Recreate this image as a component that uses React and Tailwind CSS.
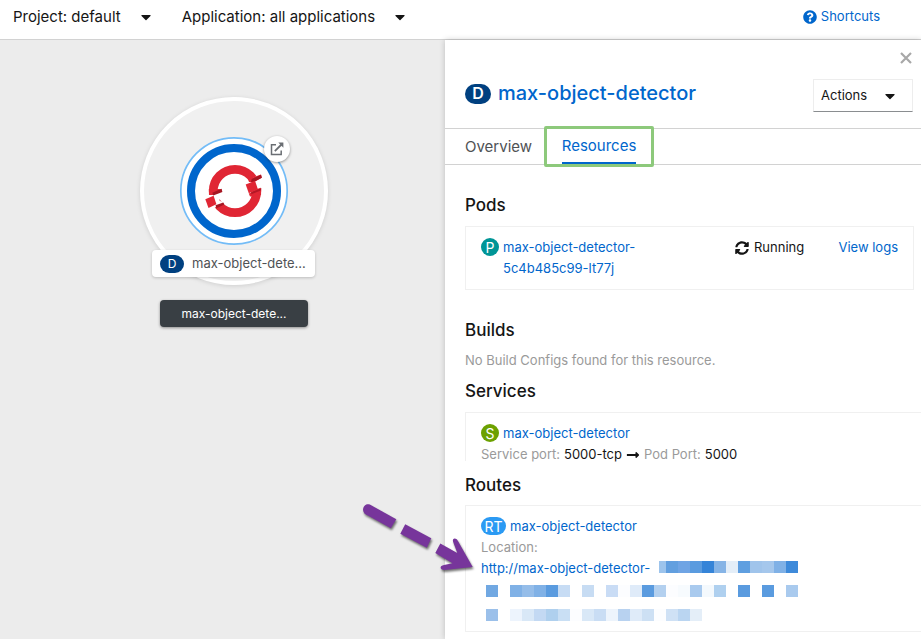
import {
  FaCaretDown,
  FaLongArrowAltRight,
  FaQuestionCircle,
} from 'react-icons/fa';

const routeHostCells = [
  'w-[7px] bg-[#9dc4ec]',
  'w-3 bg-[#629fdf]',
  'w-3 bg-[#6fa4e4]',
  'w-3 bg-[#5a9bdf]',
  'w-3 bg-[#3584d8]',
  'w-3 bg-[#86b4e6]',
  'w-3 bg-[#e4eef8]',
  'w-3 bg-[#5f9fe0]',
  'w-3 bg-[#a0c4eb]',
  'w-3 bg-[#a5c7ec]',
  'w-3 bg-[#80b1e6]',
  'w-3 bg-[#3e8ada]',
];

const routeDomainCells = [
  'bg-[#71a8e2]', '', 'bg-[#80b1e6]', 'bg-[#95bde9]', 'bg-[#80b1e6]', 'bg-[#5a9bdf]',
  'bg-[#c7dcf4]', '', 'bg-[#c7dcf3]', '', 'bg-[#c9dcf5]', 'bg-[#fcfdff]', 'bg-[#dfebf9]',
  'bg-[#5a9bdf]', 'bg-[#b3d0ef]', 'bg-[#fcfdff]', 'bg-[#f7fbfe]', 'bg-[#a9caee]',
  'bg-[#f4f9fd]', 'bg-[#afd0ef]', '', 'bg-[#5a9bdf]', '', 'bg-[#5a9bdf]', '', 'bg-[#a9caee]',
];

const routeSuffixCells = [
  'bg-[#9bc0ea]', '', 'bg-[#edf4fd]', 'bg-[#d9e8f7]', 'bg-[#c3d9f3]', 'bg-[#afd0ee]',
  'bg-[#c9dff4]', 'bg-[#fcfdff]', 'bg-[#d9e8f7]', 'bg-[#c9ddf4]', 'bg-[#edf4fc]',
  'bg-[#b8d2f0]', 'bg-[#dfebf9]', 'bg-[#cde0f4]', 'bg-[#fcfdff]', 'bg-[#cfe1f5]',
  'bg-[#bad5f1]', 'bg-[#e4eef8]',
];

function MaskRow({ cells }) {
  return (
    <div className="flex h-3 pl-[5px]" aria-hidden="true">
      {cells.map((color, i) => (
        <span key={i} className={`w-3 ${color}`} />
      ))}
    </div>
  );
}

function SyncIcon() {
  return (
    <svg viewBox="0 0 512 512" className="size-[14px]" fill="currentColor" aria-hidden="true">
      <path d="M370.72 133.28C339.458 104.008 298.888 87.962 255.848 88c-77.458.068-144.328 53.178-162.791 126.85-1.344 5.363-6.122 9.15-11.651 9.15H24.103c-7.498 0-13.194-6.807-11.807-14.176C33.933 94.924 134.813 8 256 8c66.448 0 126.791 26.136 171.315 68.685L463.03 40.97C478.149 25.851 504 36.559 504 57.941V192c0 13.255-10.745 24-24 24H345.941c-21.382 0-32.09-25.851-16.971-40.971l41.75-41.749zM32 296h134.059c21.382 0 32.09 25.851 16.971 40.971l-41.75 41.75c31.262 29.273 71.835 45.319 114.876 45.28 77.418-.07 144.315-53.144 162.787-126.849 1.344-5.363 6.122-9.15 11.651-9.15h57.304c7.498 0 13.194 6.807 11.807 14.176C478.067 417.076 377.187 504 256 504c-66.448 0-126.791-26.136-171.315-68.685L48.97 471.03C33.851 486.149 8 475.441 8 454.059V320c0-13.255 10.745-24 24-24z" />
    </svg>
  );
}

function TopologyNode() {
  return (
    <div className="absolute top-[57px] left-[139px] w-[190px]">
      <svg viewBox="0 0 190 190" className="size-[190px] drop-shadow-[0_1px_2px_rgba(0,0,0,0.12)]" aria-hidden="true">
        <circle cx="95" cy="94" r="92" fill="#f0f0f0" stroke="#fff" strokeWidth="4" />
        <circle cx="95" cy="94" r="53.2" fill="#fff" stroke="#73bcf7" strokeWidth="1.7" />
        <circle cx="95" cy="94" r="43" fill="#fff" stroke="#0066cc" strokeWidth="8" />
        <circle cx="96" cy="94" r="21.7" fill="none" stroke="#e02634" strokeWidth="8.8" />
        <path d="M107 84.5 L112 82 L124 76 L124 90 L118 92 L109 96 L106 88Z" fill="#fff" />
        <path d="M68 95.5 L84 92 L86 98 L80 103 L84 106 L76 110.5 L68 112Z" fill="#fff" />
        <path d="M109 82.2 L122 77.4 L122.8 80.7 L114.3 85.3 L110 85Z" fill="#e02634" />
        <path d="M112.7 82 L122 77.7 L122.8 80.7 L114.5 85.2 L112 85Z" fill="#a61622" />
        <path d="M106.7 87.4 L116 83.7 L118.9 92.3 L109.8 96.3Z" fill="#e02634" />
        <path d="M109.8 96.5 L122.3 91.4 L122 98 L111 99.5Z" fill="#e02634" />
        <path d="M112 95.2 L122.3 91.2 L121.8 93.6 L112.4 97.2Z" fill="#b31725" />
        <path d="M69.8 92 L79 92 L83 92.2 L74 98 L70 98Z" fill="#e02634" />
        <path d="M73.3 95.8 L82.6 91.7 L83.4 94.9 L74.3 98.6Z" fill="#a61622" />
        <path d="M66.3 102.3 L74.6 98.8 L77.4 107.3 L69.5 111Z" fill="#e02634" />
        <path d="M76.5 108.3 L84.4 105.6 L85.4 107.6 L77.4 111.2Z" fill="#a61622" />
      </svg>
      <a
        href="#open-url"
        aria-label="Open URL"
        className="absolute top-[39px] left-[125px] flex size-[26px] items-center justify-center rounded-full bg-white text-[#6a6e73] shadow-[0_1px_3px_rgba(0,0,0,0.4)]"
      >
        <svg viewBox="0 0 14 14" className="size-[14px]" fill="none" stroke="currentColor" aria-hidden="true">
          <path d="M6 2.8H1.5V12.5H11.2V8.5" strokeWidth="1.5" />
          <path d="M4.8 9.2L11.5 2.5" strokeWidth="1.8" />
          <path d="M8.3 .6H13.4V5.7Z" fill="currentColor" stroke="none" />
        </svg>
      </a>
      <button
        type="button"
        className="absolute top-[153px] left-[13px] flex h-[27px] w-[163px] items-center gap-2 rounded-[4px] bg-white pl-2 text-[13px] whitespace-nowrap text-[#4f5255] shadow-[0_1px_3px_rgba(0,0,0,0.2)]"
      >
        <span className="flex h-[18px] w-6 items-center justify-center rounded-full bg-[#004080] text-[12px] text-white">D</span>
        max-object-dete...
      </button>
      <button
        type="button"
        className="absolute top-[203px] left-[21px] h-[27px] w-[148px] rounded-[4px] bg-[#393f44] text-[12px] whitespace-nowrap text-white shadow-[0_1px_3px_rgba(0,0,0,0.4)]"
      >
        max-object-dete...
      </button>
    </div>
  );
}

function PointerArrow() {
  return (
    <svg
      viewBox="0 0 120 80"
      className="pointer-events-none absolute top-[457px] left-[358px] h-20 w-[120px] drop-shadow-[1px_2px_1px_rgba(0,0,0,0.55)]"
      aria-hidden="true"
    >
      <g fill="#77359b">
        <path d="M11.8 7.5 L38.3 22.3 L32.8 31.2 L7.6 17.3 C2.4 13.8 5.8 5.3 11.8 7.5Z" />
        <path d="M47.2 27.2 L73.3 41.3 L68.8 50.7 L42.3 36.7Z" />
        <path d="M82.3 46.6 L99.3 56 L95 44.5 C94 40.8 98.3 40.5 99.8 43.7 L114.7 70 L86.6 73 C81.6 73.2 81.2 68.6 86 68 L94.5 66.3 L77.3 56Z" />
      </g>
    </svg>
  );
}

function ResourceBadge({ children, className }) {
  return (
    <span className={`mt-px flex h-[18px] shrink-0 items-center justify-center rounded-full text-[14px] text-white ${className}`}>
      {children}
    </span>
  );
}

function SectionTitle({ children, className = '' }) {
  return <h2 className={`text-[17px] leading-6 font-medium ${className}`}>{children}</h2>;
}

export default function App() {
  return (
    <div className="flex min-h-screen flex-col bg-[#ececec] font-['Inter','Liberation_Sans',sans-serif] text-[13px] leading-[21px] text-[#151515]">
      <header className="flex h-10 items-center border-b border-[#d2d2d2] bg-white pr-[41px] pb-[6px] pl-[13px] text-[15px]">
        <button type="button" className="flex items-center gap-5">
          Project: default
          <FaCaretDown className="h-4 w-[10px]" />
        </button>
        <button type="button" className="ml-[31px] flex items-center gap-5">
          Application: all applications
          <FaCaretDown className="h-4 w-[10px]" />
        </button>
        <a href="#shortcuts" className="ml-auto flex items-center gap-1 text-[13px] text-[#0066cc]">
          <FaQuestionCircle className="size-[14px]" />
          Shortcuts
        </a>
      </header>

      <div className="relative flex flex-1">
        <main className="flex-1">
          <TopologyNode />
        </main>

        <aside className="w-[476px] shrink-0 bg-white shadow-[0_0_6px_rgba(0,0,0,0.2)]">
          <div className="flex h-9 justify-end pr-[9px]">
            <button type="button" aria-label="Close" className="text-[#a8a8a8]">
              <svg viewBox="0 0 12 12" className="size-3" fill="none" stroke="currentColor" strokeWidth="2.2" aria-hidden="true">
                <path d="M1 1L11 11M11 1L1 11" />
              </svg>
            </button>
          </div>
          <div className="flex items-center pt-[3px] pr-2 pb-4 pl-5">
            <h1 className="flex items-center gap-[7px] pb-1 text-[20px] font-medium">
              <span className="flex h-5 w-[26px] items-center justify-center rounded-full bg-[#004080] text-[16px] font-semibold text-white">D</span>
              <a href="#deployment" className="text-[#0066cc]">max-object-detector</a>
            </h1>
            <button
              type="button"
              className="ml-auto flex h-[33px] w-[100px] items-center justify-between border border-[#ededed] border-b-[#8a8d90] pr-[17px] pl-[7px]"
            >
              Actions
              <FaCaretDown className="h-4 w-[10px]" />
            </button>
          </div>

          <nav className="flex h-[37px] items-center border-y border-[#d2d2d2] pl-5 text-[15px]">
            <button type="button" className="w-[67px] text-left text-[#4f5255]">Overview</button>
            <div className="ml-3 flex h-[41px] w-[110px] justify-center rounded-[2px] border-3 border-[#8dc97b]">
              <button type="button" className="border-b-2 border-[#0066cc] text-[#0066cc]">Resources</button>
            </div>
          </nav>

          <div className="pt-7 pr-[7px] pl-5">
            <SectionTitle>Pods</SectionTitle>
            <div className="mt-[9px] flex h-16 border border-[#f0f0f0] px-[15px] pt-[10px]">
              <div className="flex w-[254px] items-start gap-1">
                <ResourceBadge className="w-[18px] bg-[#009596]">P</ResourceBadge>
                <a href="#pod" className="w-40 text-[#0066cc]">max-object-detector-<br />5c4b485c99-lt77j</a>
              </div>
              <div className="flex h-[21px] items-center gap-[5px]">
                <SyncIcon />
                Running
              </div>
              <a href="#logs" className="ml-auto text-[#0066cc]">View logs</a>
            </div>

            <SectionTitle className="mt-7">Builds</SectionTitle>
            <p className="mt-2 text-[#9a9a9a]">No Build Configs found for this resource.</p>

            <SectionTitle className="mt-2">Services</SectionTitle>
            <div className="mt-[9px] -mr-[7px] h-[49px] border-t border-l border-[#f0f0f0] pt-[10px] pl-[15px]">
              <div className="flex items-start gap-1">
                <ResourceBadge className="w-[18px] bg-[#6ca100]">S</ResourceBadge>
                <a href="#service" className="text-[#0066cc]">max-object-detector</a>
              </div>
              <div className="flex items-center gap-1">
                <span className="text-[#9a9a9a]">Service port:</span>
                5000-tcp
                <FaLongArrowAltRight className="size-[14px]" />
                <span className="text-[#9a9a9a]">Pod Port:</span>
                5000
              </div>
            </div>

            <SectionTitle className="mt-3">Routes</SectionTitle>
            <div className="mt-2 -mr-[7px] border-y border-l border-[#f0f0f0] pt-[10px] pb-[10px] pl-[15px]">
              <div className="flex items-start gap-1">
                <ResourceBadge className="w-[25px] bg-[#2b9af3]">RT</ResourceBadge>
                <a href="#route" className="text-[#0066cc]">max-object-detector</a>
              </div>
              <div className="text-[#9a9a9a]">Location:</div>
              <div className="flex w-[317px]">
                <a href="#location" className="w-[178px] whitespace-nowrap text-[#0066cc]">http://max-object-detector-</a>
                <div className="mt-[3px] flex h-3" aria-hidden="true">
                  {routeHostCells.map((cell, i) => (
                    <span key={i} className={cell} />
                  ))}
                </div>
              </div>
              <div className="flex flex-col gap-3 pt-[6px]">
                <MaskRow cells={routeDomainCells} />
                <MaskRow cells={routeSuffixCells} />
              </div>
            </div>
          </div>
        </aside>

        <PointerArrow />
      </div>
    </div>
  );
}
